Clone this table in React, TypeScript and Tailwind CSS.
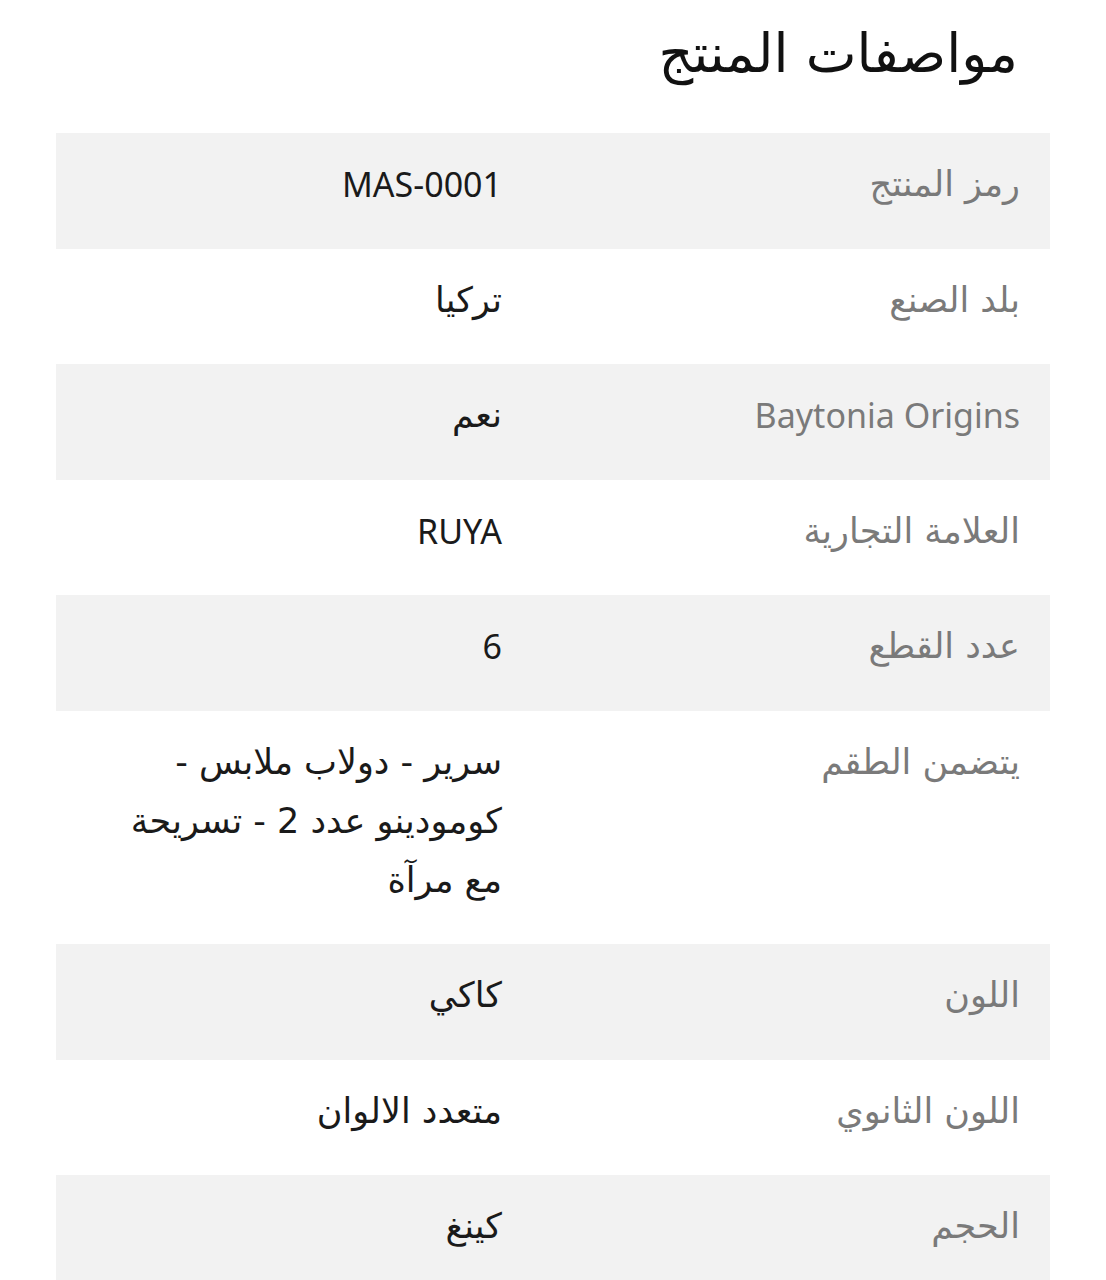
const specs: { label: string; value: string }[] = [
  { label: "رمز المنتج", value: "MAS-0001" },
  { label: "بلد الصنع", value: "تركيا" },
  { label: "Baytonia Origins", value: "نعم" },
  { label: "العلامة التجارية", value: "RUYA" },
  { label: "عدد القطع", value: "6" },
  { label: "يتضمن الطقم", value: "سرير - دولاب ملابس - كومودينو عدد 2 - تسريحة مع مرآة" },
  { label: "اللون", value: "كاكي" },
  { label: "اللون الثانوي", value: "متعدد الالوان" },
  { label: "الحجم", value: "كينغ" },
];

const arabic = /[\u0600-\u06FF]/;

// arabic copy runs a bit larger than the latin to match the reference widths
const face = (t: string) =>
  arabic.test(t)
    ? "font-['DejaVu_Sans',sans-serif] text-[35px]"
    : "font-['Noto_Sans',sans-serif] text-[34px]";

export default function App() {
  return (
    <div dir="rtl" className="min-h-[1280px] bg-white px-[56px] pt-[20px]">
      <h1 className="pr-[32px] font-['DejaVu_Sans',sans-serif] text-[54px] font-normal leading-[68px] text-[#111]">
        مواصفات المنتج
      </h1>

      <div className="mt-[45px]">
        {specs.map((s, i) => (
          <div
            key={s.label}
            className={`grid grid-cols-2 pt-[22px] pb-[34.5px] leading-[59px] ${i % 2 === 0 ? "bg-[#f2f2f2]" : "bg-white"}`}
          >
            <div className={`pr-[30px] text-[#7a7a7a] ${face(s.label)}`}>{s.label}</div>
            <div className={`pl-[51px] pr-[51px] text-[#1a1a1a] ${face(s.value)}`}>{s.value}</div>
          </div>
        ))}
      </div>
    </div>
  );
}
